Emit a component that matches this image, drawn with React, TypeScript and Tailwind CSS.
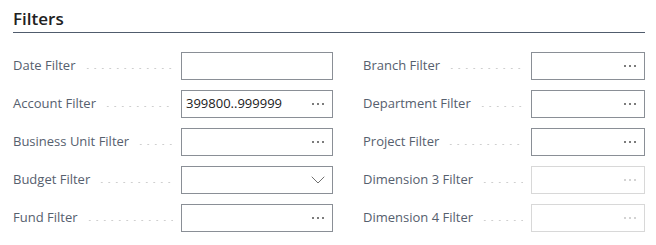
import { ChevronDown } from 'lucide-react';

type Field = {
  label: string;
  value?: string;
  kind: 'plain' | 'lookup' | 'select';
  disabled?: boolean;
};

const LEFT: Field[] = [
  { label: 'Date Filter', kind: 'plain' },
  { label: 'Account Filter', kind: 'lookup', value: '399800..999999' },
  { label: 'Business Unit Filter', kind: 'lookup' },
  { label: 'Budget Filter', kind: 'select' },
  { label: 'Fund Filter', kind: 'lookup' },
];

const RIGHT: Field[] = [
  { label: 'Branch Filter', kind: 'lookup' },
  { label: 'Department Filter', kind: 'lookup' },
  { label: 'Project Filter', kind: 'lookup' },
  { label: 'Dimension 3 Filter', kind: 'lookup', disabled: true },
  { label: 'Dimension 4 Filter', kind: 'lookup', disabled: true },
];

function Dots({ muted }: { muted?: boolean }) {
  return (
    <span className={`flex gap-[3px] ${muted ? 'text-[#c4c4c4]' : 'text-[#505050]'}`}>
      {[0, 1, 2].map(i => (
        <span key={i} className="w-[2px] h-[2px] rounded-full bg-current" />
      ))}
    </span>
  );
}

function Row({ f }: { f: Field }) {
  return (
    <div className="flex items-center h-[28px]">
      <div className="w-[168px] flex items-center pr-2 shrink-0">
        <span className="text-[13px] text-[#56606e] whitespace-nowrap">{f.label}</span>
        <span className="flex-1 ml-2 h-[3px] mt-[5px] bg-[radial-gradient(circle,#cfcfcf_0.7px,transparent_1.1px)] bg-[length:7.5px_3px] bg-repeat-x" />
      </div>
      <div
        className={`flex-1 h-[28px] border flex items-center justify-between pl-[4px] pr-[8px] bg-white ${
          f.disabled ? 'border-[#d8d8d8]' : 'border-[#8a8f96]'
        }`}
      >
        <span className="text-[13px] text-[#212121]">{f.value ?? ''}</span>
        {f.kind === 'lookup' && <Dots muted={f.disabled} />}
        {f.kind === 'select' && (
          <ChevronDown size={24} strokeWidth={0.9} className="text-[#606060] -mr-[6px]" />
        )}
      </div>
    </div>
  );
}

export default function App() {
  return (
    <div className="w-[656px] h-[245px] bg-white pl-[13px] pr-[11px] font-['Open_Sans',sans-serif]">
      <div className="pt-[9px] pb-[3px] border-b border-[#505c6d]">
        <h2 className="text-[17px] font-semibold text-[#212121] leading-[20px]">Filters</h2>
      </div>
      <div className="flex gap-[30px] pt-[19px]">
        <div className="w-[320px] flex flex-col gap-[10px]">
          {LEFT.map(f => <Row key={f.label} f={f} />)}
        </div>
        <div className="flex-1 flex flex-col gap-[10px]">
          {RIGHT.map(f => <Row key={f.label} f={f} />)}
        </div>
      </div>
    </div>
  );
}
